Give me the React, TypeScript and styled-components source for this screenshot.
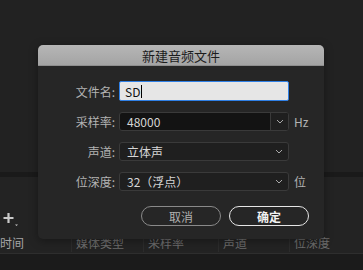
import React from "react";
import styled, { createGlobalStyle } from "styled-components";

const Global = createGlobalStyle`
  html, body { margin: 0; padding: 0; background: #222222; }
  body { width: 363px; height: 270px; overflow: hidden; font-family: "Noto Sans CJK SC", "Noto Sans", sans-serif; }
  * { box-sizing: border-box; }
`;

const Page = styled.div`
  position: relative;
  width: 363px;
  height: 270px;
  display: flex;
  flex-direction: column;
  background: #222222;
`;

const TopArea = styled.div`
  height: 172px;
  background: #222222;
`;

const Band = styled.div`
  height: 5px;
  background: #1a1a1a;
`;

const Panel = styled.div`
  height: 77px;
  background: #232323;
  display: flex;
  flex-direction: column;
  justify-content: flex-end;
  border-bottom: 1px solid #2e2e2e;
`;

const Toolbar = styled.div`
  height: 24px;
  display: flex;
  align-items: center;
  padding-left: 3px;
  margin-bottom: 1px;
`;

const HeaderRow = styled.div`
  display: flex;
  height: 19px;
  align-items: center;
  margin-bottom: 1px;
`;

const HeaderCell = styled.div<{ $w: number; $bright?: boolean; $sep?: boolean }>`
  width: ${(p) => p.$w}px;
  flex: none;
  height: 100%;
  display: flex;
  align-items: center;
  padding-left: ${(p) => (p.$sep ? 4 : 0)}px;
  border-left: ${(p) => (p.$sep ? "1px solid #2c2c2c" : "none")};
  font-size: 12px;
  color: ${(p) => (p.$bright ? "#a6a6a6" : "#6e6e6e")};
  white-space: nowrap;
`;

const Bottom = styled.div`
  flex: 1;
  background: #1b1b1b;
`;

const Dialog = styled.div`
  position: absolute;
  left: 38px;
  top: 45px;
  width: 286px;
  height: 194px;
  border-radius: 5px;
  background: #262626;
  box-shadow: 0 2px 10px rgba(0, 0, 0, 0.35);
  display: flex;
  flex-direction: column;
  overflow: hidden;
`;

const TitleBar = styled.div`
  height: 21px;
  flex: none;
  background: linear-gradient(#b6b6b6, #a4a4a4);
  border-bottom: 1px solid #8e8e8e;
  display: flex;
  align-items: center;
  justify-content: center;
  font-size: 13px;
  color: #1c1c1c;
`;

const Body = styled.div`
  flex: 1;
  display: flex;
  flex-direction: column;
  padding: 15px 15px 13px 0;
`;

const Form = styled.div`
  display: grid;
  grid-template-columns: 77px 170px auto;
  column-gap: 4px;
  row-gap: 10px;
  align-items: center;
`;

const Label = styled.div`
  height: 20px;
  display: flex;
  align-items: center;
  justify-content: flex-end;
  font-size: 12px;
  color: #b3b3b3;
  white-space: nowrap;
`;

const Unit = styled.div`
  font-size: 12px;
  color: #b3b3b3;
  padding-left: 1px;
`;

const TextInput = styled.div`
  height: 20px;
  border: 1.5px solid #2f80e6;
  border-radius: 2px;
  background: #e6e6e6;
  display: flex;
  align-items: center;
  padding-left: 5px;
  font-size: 12px;
  color: #111;
`;

const Caret = styled.span`
  display: inline-block;
  width: 1px;
  height: 13px;
  background: #000;
  margin-left: 1px;
`;

const Select = styled.div<{ $dark?: boolean }>`
  height: 19px;
  border: 1px solid #3a3a3a;
  border-radius: 3px;
  background: ${(p) => (p.$dark ? "#131313" : "#1f1f1f")};
  display: flex;
  align-items: center;
  font-size: 12px;
  color: #d6d6d6;
`;

const SelectText = styled.div`
  flex: 1;
  padding-left: 7px;
  white-space: nowrap;
`;

const Chevron = styled.div<{ $split?: boolean }>`
  width: 18px;
  height: 100%;
  flex: none;
  display: flex;
  align-items: center;
  justify-content: center;
  border-left: ${(p) => (p.$split ? "1px solid #3a3a3a" : "none")};
  background: ${(p) => (p.$split ? "#1f1f1f" : "transparent")};
  border-radius: 0 2px 2px 0;
`;

const Buttons = styled.div`
  margin-top: 15px;
  display: flex;
  justify-content: flex-end;
  gap: 8px;
`;

const Button = styled.div<{ $primary?: boolean }>`
  width: 80px;
  height: 20px;
  border-radius: 10px;
  border: 1.5px solid ${(p) => (p.$primary ? "#e6e6e6" : "#8a8a8a")};
  display: flex;
  align-items: center;
  justify-content: center;
  font-size: 12px;
  font-weight: ${(p) => (p.$primary ? 700 : 400)};
  color: ${(p) => (p.$primary ? "#f2f2f2" : "#b0b0b0")};
`;

const ChevronIcon = () => (
  <svg width="8" height="5" viewBox="0 0 8 5">
    <path d="M1 1 L4 4 L7 1" fill="none" stroke="#a8a8a8" strokeWidth="1" />
  </svg>
);

const PlusIcon = () => (
  <svg width="16" height="16" viewBox="0 0 16 16">
    <path d="M5.5 1 V11 M0.5 6 H10.5" stroke="#c9c9c9" strokeWidth="2.2" />
    <path d="M12 12.5 H15 L13.5 14 Z" fill="#c9c9c9" />
  </svg>
);

export default function App() {
  return (
    <>
      <Global />
      <Page>
        <TopArea />
        <Band />
        <Panel>
          <Toolbar>
            <PlusIcon />
          </Toolbar>
          <HeaderRow>
            <HeaderCell $w={71} $bright>时间</HeaderCell>
            <HeaderCell $w={72} $sep>媒体类型</HeaderCell>
            <HeaderCell $w={75} $sep>采样率</HeaderCell>
            <HeaderCell $w={71} $sep>声道</HeaderCell>
            <HeaderCell $w={74} $sep>位深度</HeaderCell>
          </HeaderRow>
        </Panel>
        <Bottom />
        <Dialog>
          <TitleBar>新建音频文件</TitleBar>
          <Body>
            <Form>
              <Label>文件名:</Label>
              <TextInput>
                SD<Caret />
              </TextInput>
              <span />
              <Label>采样率:</Label>
              <Select $dark>
                <SelectText>48000</SelectText>
                <Chevron $split>
                  <ChevronIcon />
                </Chevron>
              </Select>
              <Unit>Hz</Unit>
              <Label>声道:</Label>
              <Select>
                <SelectText>立体声</SelectText>
                <Chevron>
                  <ChevronIcon />
                </Chevron>
              </Select>
              <span />
              <Label>位深度:</Label>
              <Select>
                <SelectText>32（浮点）</SelectText>
                <Chevron>
                  <ChevronIcon />
                </Chevron>
              </Select>
              <Unit>位</Unit>
            </Form>
            <Buttons>
              <Button>取消</Button>
              <Button $primary>确定</Button>
            </Buttons>
          </Body>
        </Dialog>
      </Page>
    </>
  );
}
